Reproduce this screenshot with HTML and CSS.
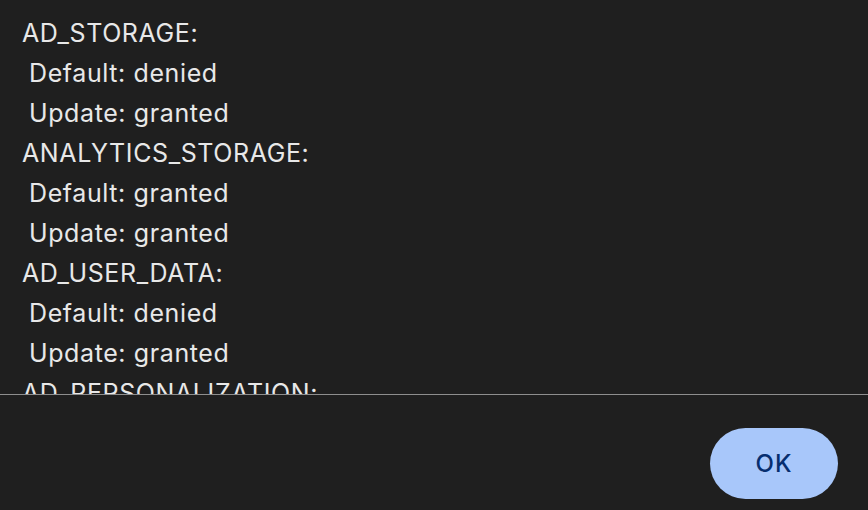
FILE: index.html
```html
<!DOCTYPE html>
<html lang="en">
<head>
    <meta charset="UTF-8">
    <meta name="viewport" content="width=device-width, initial-scale=1.0">
    <title>Consent State</title>
    <link rel="stylesheet" href="styles.css">
</head>
<body>
    <div class="dialog">
        <div class="dialog-body">
            <div class="line">AD_STORAGE:</div>
            <div class="line sub">Default: denied</div>
            <div class="line sub">Update: granted</div>
            <div class="line">ANALYTICS_STORAGE:</div>
            <div class="line sub">Default: granted</div>
            <div class="line sub">Update: granted</div>
            <div class="line">AD_USER_DATA:</div>
            <div class="line sub">Default: denied</div>
            <div class="line sub">Update: granted</div>
            <div class="line">AD_PERSONALIZATION:</div>
            <div class="line sub">Default: denied</div>
            <div class="line sub">Update: granted</div>
        </div>
        <div class="dialog-footer">
            <button type="button" class="ok-btn">OK</button>
        </div>
    </div>
</body>
</html>
```

FILE: styles.css
```css
html, body {
    margin: 0;
    padding: 0;
    height: 100%;
}

body {
    font-family: Inter, "Noto Sans", sans-serif;
    background-color: #1f1f1f;
    color: #e8e8e8;
}

.dialog {
    display: flex;
    flex-direction: column;
    height: 510px;
}

.dialog-body {
    height: 381px;
    overflow: hidden;
    padding: 13px 0 0 22px;
    border-bottom: 1px solid #8e8e8e;
}

.line {
    font-size: 25px;
    line-height: 40px;
    letter-spacing: 0.6px;
    white-space: pre;
}

.line.sub {
    padding-left: 7px;
}

.dialog-footer {
    flex: 1;
    display: flex;
    justify-content: flex-end;
    align-items: flex-start;
    padding: 33px 30px 0 0;
}

.ok-btn {
    width: 128px;
    height: 71px;
    border: none;
    border-radius: 36px;
    background-color: #a8c7fa;
    color: #062e6f;
    font-family: inherit;
    font-size: 24px;
    font-weight: 500;
    letter-spacing: 1px;
    cursor: pointer;
}
```
